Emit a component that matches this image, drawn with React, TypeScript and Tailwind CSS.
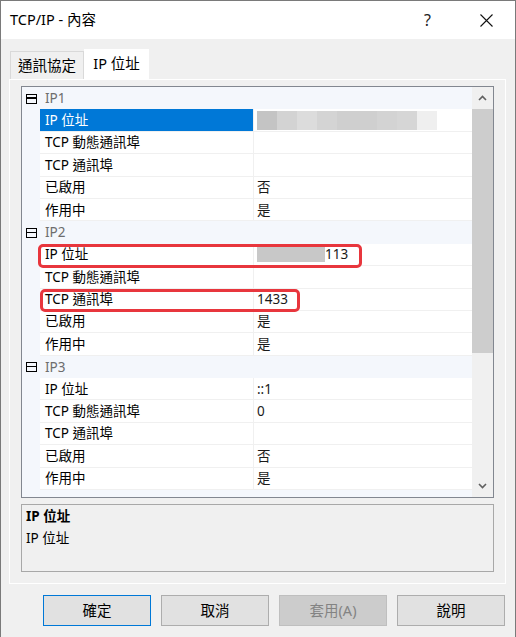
import type { ReactNode } from "react";

type Row = { name: string; value: ReactNode; selected?: boolean };
type Group = { name: string; rows: Row[] };

const FONT = { fontFamily: '"Noto Sans", "Noto Sans CJK TC", sans-serif' };

function Blur1() {
  return (
    <div className="flex h-[19px] items-stretch">
      <div className="w-[20px] bg-[#c4c4c4]" />
      <div className="w-[20px] bg-[#d3d3d3]" />
      <div className="w-[20px] bg-[#dcdcdc]" />
      <div className="w-[20px] bg-[#d4d4d4]" />
      <div className="w-[40px] bg-[#cfcfcf]" />
      <div className="w-[20px] bg-[#d3d3d3]" />
      <div className="w-[20px] bg-[#d6d6d6]" />
      <div className="w-[20px] bg-[#efefef]" />
    </div>
  );
}

function Blur2() {
  return (
    <span className="flex items-center">
      <span className="inline-block h-[15px] w-[68px] bg-[#c8c8c8]" />
      <span>113</span>
    </span>
  );
}

const groups: Group[] = [
  {
    name: "IP1",
    rows: [
      { name: "IP 位址", value: <Blur1 />, selected: true },
      { name: "TCP 動態通訊埠", value: "" },
      { name: "TCP 通訊埠", value: "" },
      { name: "已啟用", value: "否" },
      { name: "作用中", value: "是" },
    ],
  },
  {
    name: "IP2",
    rows: [
      { name: "IP 位址", value: <Blur2 /> },
      { name: "TCP 動態通訊埠", value: "" },
      { name: "TCP 通訊埠", value: "1433" },
      { name: "已啟用", value: "是" },
      { name: "作用中", value: "是" },
    ],
  },
  {
    name: "IP3",
    rows: [
      { name: "IP 位址", value: "::1" },
      { name: "TCP 動態通訊埠", value: "0" },
      { name: "TCP 通訊埠", value: "" },
      { name: "已啟用", value: "否" },
      { name: "作用中", value: "是" },
    ],
  },
  // next group is scrolled out of view: only its expander peeks in
  { name: "", rows: [] },
];

function Expander() {
  return (
    <span className="relative mt-[1px] block h-[10px] w-[11px] border-[1.5px] border-black">
      <span className="absolute left-0 right-0 top-[2.5px] h-[1.5px] bg-black" />
    </span>
  );
}

function Chevron({ down }: { down?: boolean }) {
  return (
    <svg width="9" height="6" viewBox="0 0 9 6" className={down ? "rotate-180" : ""}>
      <path d="M1 5 L4.5 1.5 L8 5" fill="none" stroke="#606060" strokeWidth="1.6" />
    </svg>
  );
}

function PropertyGrid() {
  return (
    <div className="flex h-[412px] border border-[#828790] bg-white">
      <div className="relative flex-1 overflow-hidden">
        {groups.map((g, i) => (
          <div key={i}>
            <div className="flex h-[22.4px] items-center bg-[#f4f7fc]">
              <div className="flex w-[18px] justify-center pl-[1px]">
                <Expander />
              </div>
              <span className="pl-[5px] text-[13.5px] text-[#6d6d6d]">{g.name}</span>
            </div>
            {g.rows.map((r) => (
              <div key={g.name + r.name} className="flex h-[22.4px]">
                <div className="w-[18px] shrink-0 bg-[#f4f7fc]" />
                <div
                  className={
                    "flex w-[213px] shrink-0 items-center border-b border-[#f0f0f0] pl-[5px] text-[13.5px] " +
                    (r.selected ? "bg-[#0078d7] text-white" : "text-black")
                  }
                >
                  {r.name}
                </div>
                <div className="flex flex-1 items-center border-b border-l border-[#f0f0f0] pl-[3px] text-[13.5px] text-[#1a1a1a]">
                  {r.value}
                </div>
              </div>
            ))}
          </div>
        ))}
        <div className="absolute left-[16px] top-[157px] h-[24px] w-[324px] rounded-[5px] border-[3px] border-[#e8363d]" />
        <div className="absolute left-[18px] top-[202px] h-[23px] w-[260px] rounded-[5px] border-[3px] border-[#e8363d]" />
      </div>
      <div className="flex w-[21px] flex-col bg-[#f0f0f0]">
        <div className="flex h-[22px] items-center justify-center">
          <Chevron />
        </div>
        <div className="h-[244px] bg-[#cdcdcd]" />
        <div className="flex-1" />
        <div className="flex h-[22px] items-center justify-center">
          <Chevron down />
        </div>
      </div>
    </div>
  );
}

function Button({ label, primary, disabled }: { label: string; primary?: boolean; disabled?: boolean }) {
  return (
    <div
      className={
        "flex h-[31px] w-[108px] items-center justify-center border text-[14.5px] " +
        (primary
          ? "border-[#0078d7] bg-[#e1e1e1] text-black"
          : disabled
            ? "border-[#bfbfbf] bg-[#cccccc] text-[#838383]"
            : "border-[#adadad] bg-[#e1e1e1] text-black")
      }
    >
      {label}
    </div>
  );
}

export default function App() {
  return (
    <div
      className="relative h-[637px] w-[516px] overflow-hidden border-x border-t border-[#7a7a7a] bg-[#f0f0f0]"
      style={FONT}
    >
      <div className="flex h-[38px] items-center bg-white pl-[9px] pr-[22px]">
        <span className="flex-1 text-[14.5px] text-black">TCP/IP - 內容</span>
        <span className="mr-[49px] text-[16px] text-[#222]">?</span>
        <svg width="13" height="13" viewBox="0 0 13 13">
          <path d="M0.5 0.5 L12.5 12.5 M12.5 0.5 L0.5 12.5" stroke="#111" strokeWidth="1.1" />
        </svg>
      </div>

      <div className="ml-[9px] mt-[10px] flex items-end">
        <div className="flex h-[28px] w-[74px] items-center justify-center border border-b-0 border-[#d9d9d9] bg-[#f0f0f0] text-[14.5px] text-black">
          通訊協定
        </div>
        <div className="flex h-[30px] w-[65px] items-center justify-center bg-white text-[14.5px] text-black">
          IP 位址
        </div>
      </div>

      <div className="ml-[8px] h-[505px] w-[497px] border border-white bg-[#f0f0f0] px-[11px] pt-[6px]">
        <PropertyGrid />
        <div className="mt-[6px] h-[68px] border border-[#a8a8a8] px-[4px]">
          <div className="text-[13.5px] font-bold leading-[22px] text-black">IP 位址</div>
          <div className="text-[13.5px] leading-[22px] text-black">IP 位址</div>
        </div>
      </div>

      <div className="ml-[42px] mt-[11px] flex gap-[10px]">
        <Button label="確定" primary />
        <Button label="取消" />
        <Button label="套用(A)" disabled />
        <Button label="說明" />
      </div>
    </div>
  );
}
